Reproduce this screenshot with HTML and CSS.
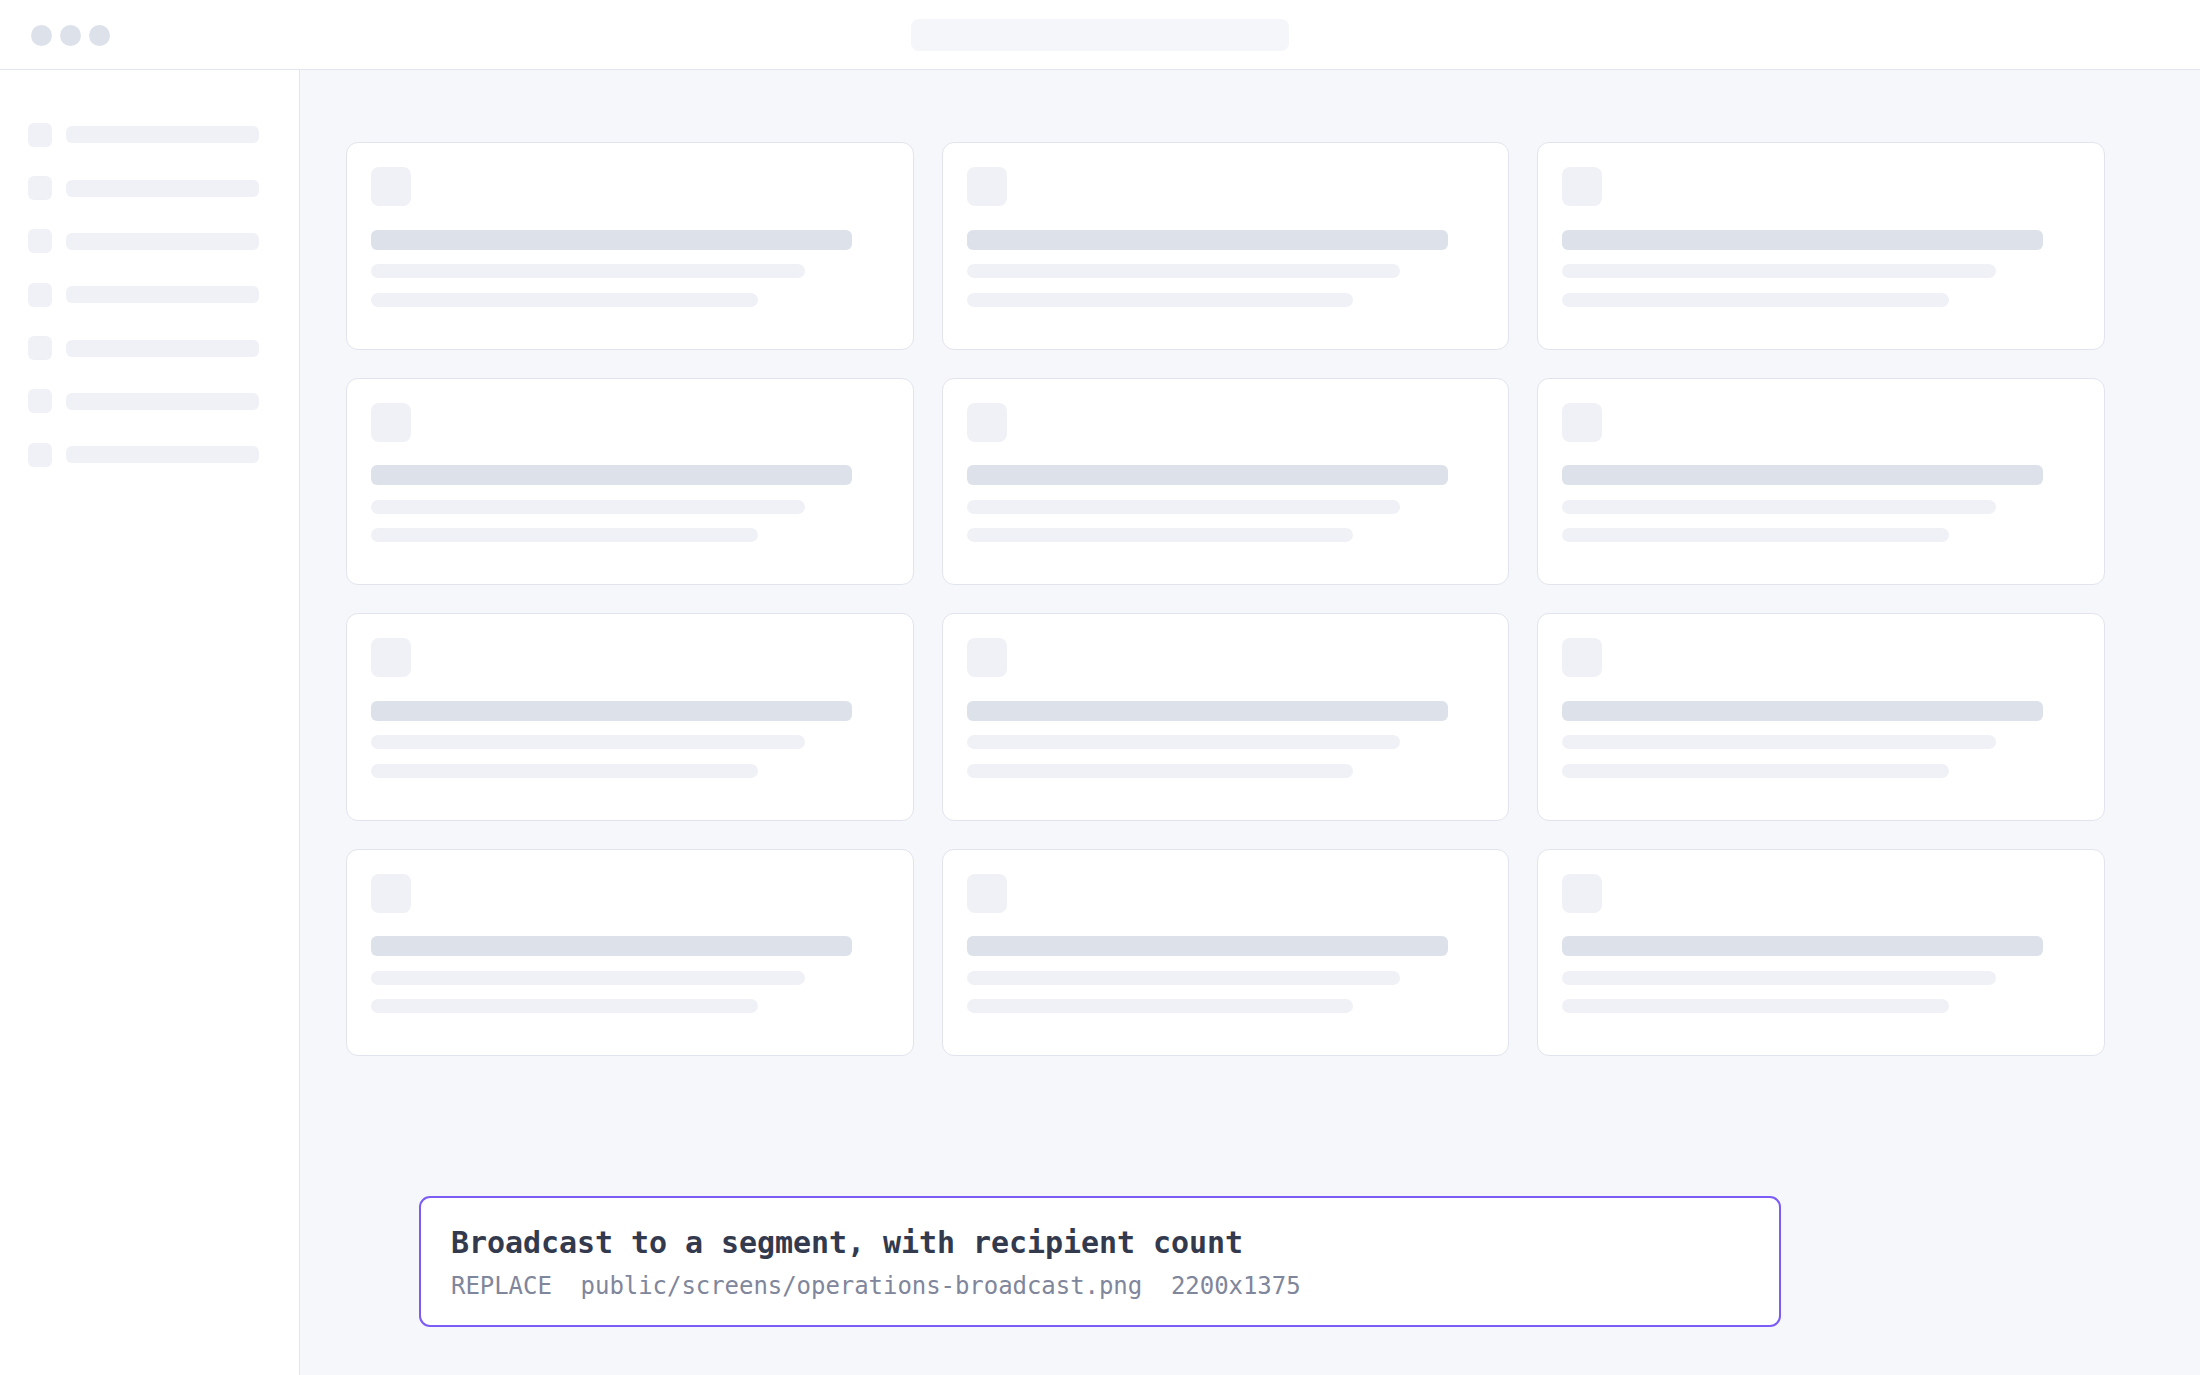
FILE: index.html
```html
<!DOCTYPE html>
<html lang="en">
<head>
<meta charset="UTF-8">
<meta name="viewport" content="width=device-width, initial-scale=1.0">
<title>Operations - Broadcast</title>
<link rel="stylesheet" href="styles.css">
</head>
<body>

<header class="topbar">
    <div class="dots">
        <span></span><span></span><span></span>
    </div>
    <div class="search"></div>
    <div></div>
</header>

<div class="layout">
    <aside class="sidebar">
        <div class="nav-item"><span class="nav-icon"></span><span class="nav-bar"></span></div>
        <div class="nav-item"><span class="nav-icon"></span><span class="nav-bar"></span></div>
        <div class="nav-item"><span class="nav-icon"></span><span class="nav-bar"></span></div>
        <div class="nav-item"><span class="nav-icon"></span><span class="nav-bar"></span></div>
        <div class="nav-item"><span class="nav-icon"></span><span class="nav-bar"></span></div>
        <div class="nav-item"><span class="nav-icon"></span><span class="nav-bar"></span></div>
        <div class="nav-item"><span class="nav-icon"></span><span class="nav-bar"></span></div>
    </aside>

    <main class="content">
        <div class="grid">
            <div class="card"><div class="card-icon"></div><div class="line title"></div><div class="line medium"></div><div class="line short"></div></div>
            <div class="card"><div class="card-icon"></div><div class="line title"></div><div class="line medium"></div><div class="line short"></div></div>
            <div class="card"><div class="card-icon"></div><div class="line title"></div><div class="line medium"></div><div class="line short"></div></div>
            <div class="card"><div class="card-icon"></div><div class="line title"></div><div class="line medium"></div><div class="line short"></div></div>
            <div class="card"><div class="card-icon"></div><div class="line title"></div><div class="line medium"></div><div class="line short"></div></div>
            <div class="card"><div class="card-icon"></div><div class="line title"></div><div class="line medium"></div><div class="line short"></div></div>
            <div class="card"><div class="card-icon"></div><div class="line title"></div><div class="line medium"></div><div class="line short"></div></div>
            <div class="card"><div class="card-icon"></div><div class="line title"></div><div class="line medium"></div><div class="line short"></div></div>
            <div class="card"><div class="card-icon"></div><div class="line title"></div><div class="line medium"></div><div class="line short"></div></div>
            <div class="card"><div class="card-icon"></div><div class="line title"></div><div class="line medium"></div><div class="line short"></div></div>
            <div class="card"><div class="card-icon"></div><div class="line title"></div><div class="line medium"></div><div class="line short"></div></div>
            <div class="card"><div class="card-icon"></div><div class="line title"></div><div class="line medium"></div><div class="line short"></div></div>
        </div>
    </main>
</div>

<div class="caption-wrap">
    <div class="caption">
        <div class="caption-title">Broadcast to a segment, with recipient count</div>
        <div class="caption-meta">REPLACE&nbsp;&nbsp;public/screens/operations-broadcast.png&nbsp;&nbsp;2200x1375</div>
    </div>
</div>

</body>
</html>
```

FILE: styles.css
```css
* {
    box-sizing: border-box;
}
body {
    margin: 0;
    padding: 0;
    height: 100vh;
    overflow: hidden;
    background: #f6f7fb;
    font-family: "DejaVu Sans Mono", "Liberation Mono", monospace;
}
.topbar {
    height: 70px;
    background: #fff;
    border-bottom: 1px solid #e2e5ee;
    display: grid;
    grid-template-columns: 1fr 378px 1fr;
    align-items: center;
}
.dots {
    display: flex;
    gap: 8px;
    padding: 1px 0 0 31px;
}
.dots span {
    width: 21px;
    height: 21px;
    border-radius: 50%;
    background: #dde1ea;
}
.search {
    height: 32px;
    border-radius: 8px;
    background: #f5f6fa;
}
.layout {
    display: flex;
    height: calc(100vh - 70px);
}
.sidebar {
    width: 300px;
    flex-shrink: 0;
    background: #fff;
    border-right: 1px solid #e2e5ee;
    padding: 52.7px 40px 0 28px;
}
.nav-item {
    display: flex;
    align-items: center;
    gap: 14px;
    height: 24px;
    margin-bottom: 29.33px;
}
.nav-icon {
    width: 24px;
    height: 24px;
    border-radius: 6px;
    background: #f0f1f6;
    flex-shrink: 0;
}
.nav-bar {
    flex: 1;
    height: 17px;
    border-radius: 6px;
    background: #f0f1f6;
}
.content {
    flex: 1;
    padding: 72px 0 0 46px;
}
.grid {
    width: 1758.6px;
    display: grid;
    grid-template-columns: repeat(3, 1fr);
    gap: 28px;
}
.card {
    height: 207.6px;
    background: #fff;
    border: 1px solid #e1e4ed;
    border-radius: 12px;
    padding: 24px;
}
.card-icon {
    width: 40px;
    height: 39px;
    border-radius: 8px;
    background: #f0f1f6;
    margin-bottom: 23.5px;
}
.line {
    height: 14px;
    border-radius: 7px;
    background: #f0f1f6;
    margin-bottom: 14.5px;
}
.line.title {
    height: 20px;
    border-radius: 6px;
    background: #dde1ea;
    width: 93%;
}
.line.medium {
    width: 83.8%;
}
.line.short {
    width: 74.7%;
}
.caption-wrap {
    position: fixed;
    left: 0;
    right: 0;
    bottom: 48px;
    display: flex;
    justify-content: center;
}
.caption {
    width: 1362px;
    background: #fff;
    border: 2px solid #7b5cf5;
    border-radius: 11px;
    padding: 27px 30px 25px;
}
.caption-title {
    font-size: 30px;
    font-weight: bold;
    color: #343a4e;
    letter-spacing: -0.06px;
}
.caption-meta {
    margin-top: 12.5px;
    font-size: 24px;
    color: #80869b;
    letter-spacing: -0.05px;
}
```
